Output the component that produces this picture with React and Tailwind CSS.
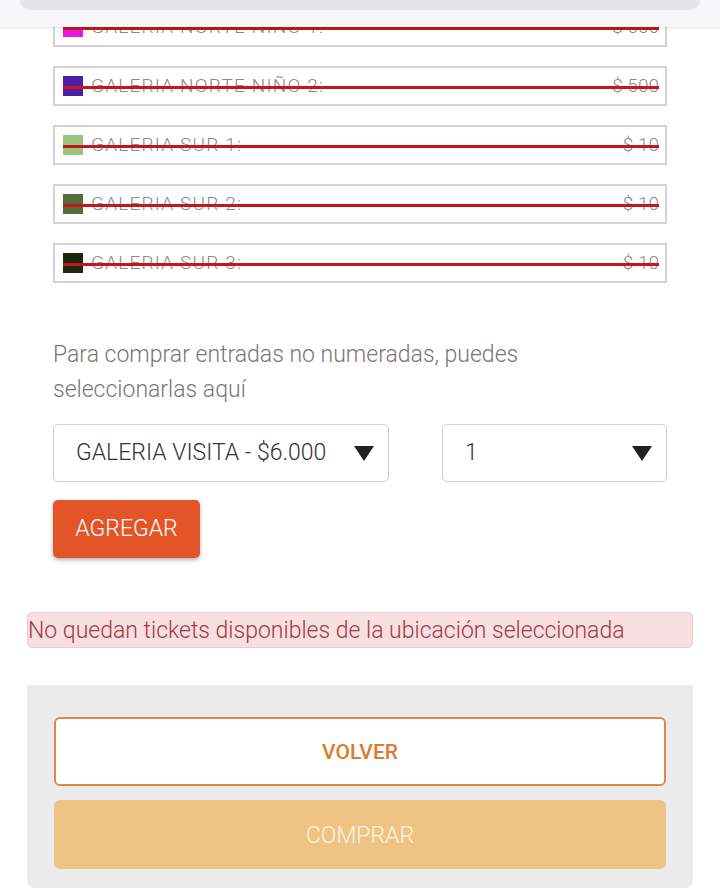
import React from 'react';

const rows = [
    { name: 'GALERIA NORTE NIÑO 1:', price: '$ 500', color: 'bg-[#e619e0]' },
    { name: 'GALERIA NORTE NIÑO 2:', price: '$ 500', color: 'bg-[#4b1fa6]' },
    { name: 'GALERIA SUR 1:', price: '$ 10', color: 'bg-[#9cc47e]' },
    { name: 'GALERIA SUR 2:', price: '$ 10', color: 'bg-[#566e3f]' },
    { name: 'GALERIA SUR 3:', price: '$ 10', color: 'bg-[#1b2a0f]' },
];

const SoldOutRow = ({ name, price, color }) => {
    return (
        <div className="relative h-[40px] border-2 border-[#d4d4d4] bg-white flex items-center pl-[8px] pr-[6px]">
            <span className={`w-[20px] h-[20px] shrink-0 ${color}`} />
            <span className="ml-[8px] text-[19px] text-[#8a8a8a] font-light tracking-[1.2px]">{name}</span>
            <span className="ml-auto text-[19px] text-[#8a8a8a] font-light">{price}</span>
            <div className="absolute left-[8px] right-[6px] top-[18px] h-[3px] bg-[#c4161c]" />
        </div>
    );
};

const Select = ({ value, className }) => {
    return (
        <div
            className={`h-[58px] border border-[#cfcfcf] rounded-[5px] bg-white flex items-center pl-[22px] pr-[14px] ${className}`}
        >
            <span className="text-[23px] text-[#333] font-light">{value}</span>
            <svg className="ml-auto" width="20" height="15" viewBox="0 0 20 15">
                <path d="M0 0 H20 L10 15 Z" fill="#222" />
            </svg>
        </div>
    );
};

export default function App() {
    return (
        <div className="relative w-[720px] h-[896px] overflow-hidden bg-white font-['Roboto',sans-serif]">
            {/* sticky header peeking in at the top */}
            <div className="absolute top-0 left-0 right-0 h-[27px] bg-[#f6f6f8] shadow-[0_1px_3px_rgba(0,0,0,0.12)] z-10">
                <div className="mx-[20px] h-[10px] bg-[#e5e5e9] rounded-b-[14px]" />
            </div>

            <div className="pt-[7px] px-[27px]">
                <div className="px-[26px] flex flex-col gap-[19px]">
                    {rows.map((r) => (
                        <SoldOutRow key={r.name} {...r} />
                    ))}
                </div>

                <div className="px-[26px] mt-[54px]">
                    <p className="text-[23px] leading-[35px] text-[#777] font-light">
                        Para comprar entradas no numeradas, puedes
                        <br />
                        seleccionarlas aquí
                    </p>

                    <div className="mt-[17px] flex">
                        <Select value="GALERIA VISITA - $6.000" className="w-[336px]" />
                        <Select value="1" className="w-[225px] ml-[53px]" />
                    </div>

                    <button className="mt-[18px] h-[58px] w-[147px] rounded-[5px] bg-[#e35526] text-white text-[23px] font-light shadow-[0_2px_4px_rgba(0,0,0,0.3)]">
                        AGREGAR
                    </button>
                </div>

                <div className="mt-[54px] h-[36px] pt-[2px] rounded-[5px] bg-[#f8dfe2] border border-[#f0c9cd] flex items-center text-[23px] text-[#a23a3f] font-light">
                    No quedan tickets disponibles de la ubicación seleccionada
                </div>

                <div className="mt-[37px] bg-[#ebebeb] rounded-b-[8px] px-[27px] pt-[32px] pb-[19px] flex flex-col gap-[14px]">
                    <button className="h-[69px] pt-[3px] rounded-[6px] border-2 border-[#e3893f] bg-white text-[21px] font-medium text-[#e07a2c]">
                        VOLVER
                    </button>
                    <button className="h-[69px] pt-[3px] rounded-[6px] bg-[#efc383] text-[23px] font-light text-[#fdf4e3]">
                        COMPRAR
                    </button>
                </div>
            </div>
        </div>
    );
}
